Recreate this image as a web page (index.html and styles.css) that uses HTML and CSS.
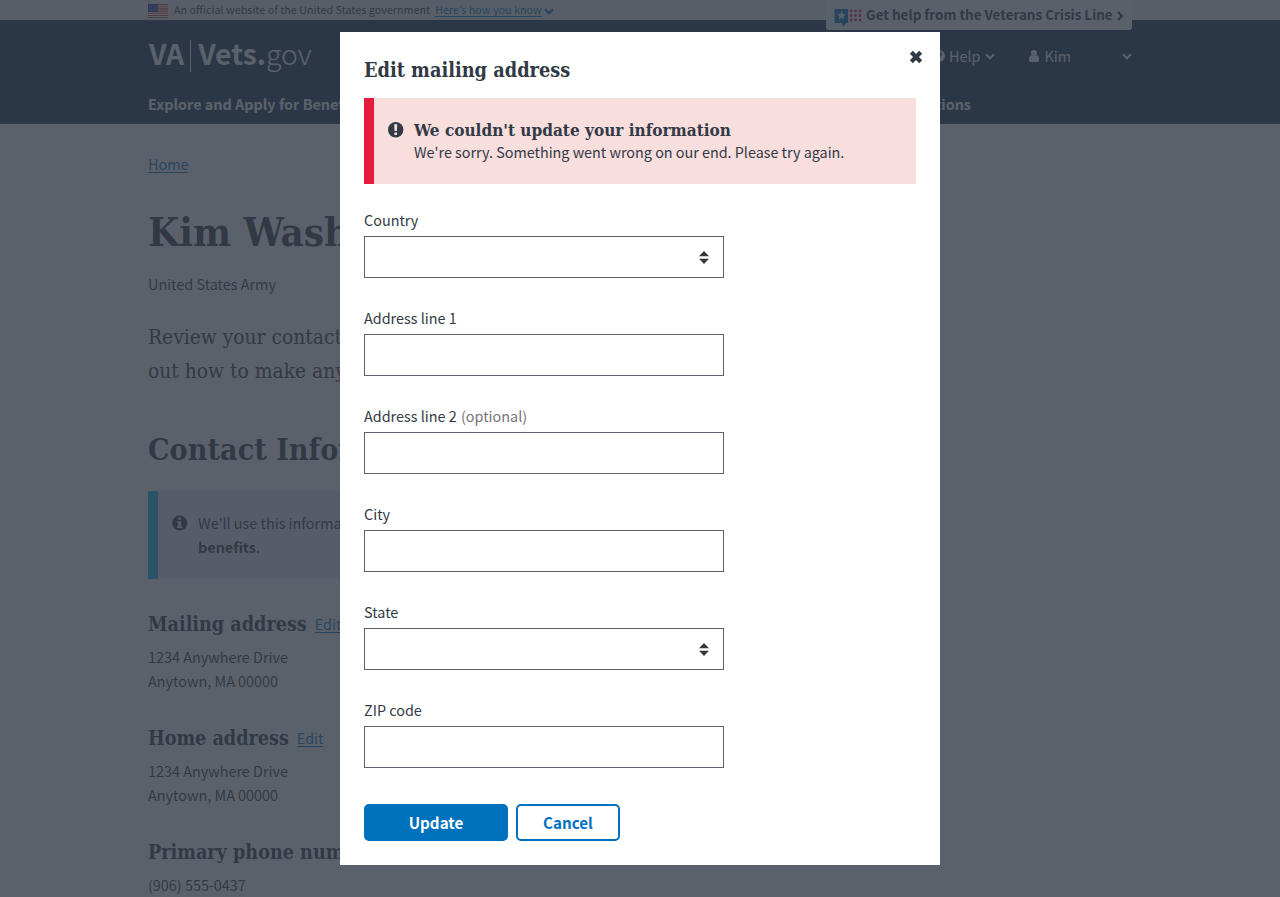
FILE: index.html
```html
<!DOCTYPE html>
<html lang="en">
<head>
<meta charset="utf-8">
<title>Vets.gov: Edit mailing address</title>
<link rel="stylesheet" href="styles.css">
</head>
<body>
<div class="page">
  <div class="banner">
    <svg class="flag" width="20" height="14" viewBox="0 0 20 14"><rect width="20" height="14" fill="#fff"/><path d="M0 .5h20M0 2.700h20M0 4.900h20M0 7.100h20M0 9.300h20M0 11.500h20M0 13.500h20" stroke="#db3e1f" stroke-width="1.100"/><rect width="10" height="8" fill="#1e33b1"/><path d="M1 2h9M1 4h9M1 6h9" stroke="#fff" stroke-dasharray="1 1" opacity=".5"/></svg>
    <span class="official">An official website of the United States government</span>
    <a class="know">Here’s how you know</a>
    <svg class="know-chevron" width="10" height="7" viewBox="0 0 10 7"><path d="M1 1.300l4 4 4-4" fill="none" stroke="#0071bc" stroke-width="2.200"/></svg>
    <div class="crisis">
      <svg width="29" height="20" viewBox="0 0 29 20"><path d="M0.500 1h13.500v14h-2l-2.500 4-1.500-4H.5z" fill="#0071bc"/><path d="M7.500 3l1.200 3.200 3.300.1-2.600 2 .9 3.200-2.800-1.800-2.800 1.800.9-3.200-2.600-2 3.300-.1z" fill="#fff"/><g fill="#e31c3d"><circle cx="17" cy="3" r="1.400"/><circle cx="21.500" cy="3" r="1.400"/><circle cx="26" cy="3" r="1.400"/><circle cx="17" cy="7.500" r="1.400"/><circle cx="21.500" cy="7.500" r="1.400"/><circle cx="26" cy="7.500" r="1.400"/><circle cx="17" cy="12" r="1.400"/><circle cx="21.500" cy="12" r="1.400"/><circle cx="26" cy="12" r="1.400"/></g></svg>
      <b class="crisis-text">Get help from the Veterans Crisis Line</b>
      <svg width="7" height="10" viewBox="0 0 7 10"><path d="M1 1l4 4-4 4" fill="none" stroke="#323a45" stroke-width="2"/></svg>
    </div>
  </div>
  <header class="header">
    <div class="brand-row">
      <div class="logo"><b class="va">VA</b><i class="bar"></i><b class="vets">Vets.</b><span class="gov">gov</span></div>
      <div class="tools">
        <svg width="12" height="12" viewBox="0 0 12 12"><circle cx="6" cy="6" r="6" fill="#fff"/><path d="M4 4.500c0-2.500 4-2.300 4 0C8 6 6 6 6 7.500M6 8.500v1.500" fill="none" stroke="#112e51" stroke-width="1.600"/></svg>
        <span class="help">Help</span>
        <svg class="help-chevron" width="10" height="7" viewBox="0 0 10 7"><path d="M1 1.300l4 4 4-4" fill="none" stroke="#fff" stroke-width="2"/></svg>
        <svg class="person" width="10" height="12" viewBox="0 0 10 12"><circle cx="5" cy="3" r="3" fill="#fff"/><path d="M2 5.200c2 1.500 4 1.500 6 0 1.500.3 2 2 2 4.500 0 1.500-.7 2.300-2 2.300H2C.7 12 0 11.200 0 9.700 0 7.200.5 5.500 2 5.200z" fill="#fff"/></svg>
        <span class="user">Kim</span>
        <svg class="user-chevron" width="10" height="7" viewBox="0 0 10 7"><path d="M1 1.300l4 4 4-4" fill="none" stroke="#fff" stroke-width="2"/></svg>
      </div>
    </div>
    <nav class="nav"><b>Explore and Apply for Benef</b><b>Locations</b></nav>
  </header>
  <main class="main">
    <a class="home">Home</a>
    <h1 class="name">Kim Wash</h1>
    <p class="branch">United States Army</p>
    <p class="intro">Review your contact<br>out how to make any</p>
    <h2 class="contact">Contact Infor</h2>
    <div class="info">
      <svg width="16" height="16" viewBox="0 0 16 16"><circle cx="7.700" cy="8" r="7.600" fill="#323a45"/><path d="M6.200 2.500h3v2.300h-3zM5.200 6.300h4v5h1.200V13H5v-1.700h1.200V8h-1z" fill="#e7e9f4"/></svg>
      <p class="info-text">We’ll use this informa<br><b>benefits</b>.</p>
    </div>
    <section class="entry"><h3 class="entry-title">Mailing address</h3><a class="edit">Edit</a><p class="entry-text">1234 Anywhere Drive<br>Anytown, MA 00000</p></section>
    <section class="entry"><h3 class="entry-title">Home address</h3><a class="edit">Edit</a><p class="entry-text">1234 Anywhere Drive<br>Anytown, MA 00000</p></section>
    <section class="entry"><h3 class="entry-title">Primary phone num</h3><p class="entry-text">(906) 555-0437</p></section>
  </main>
</div>
<div class="overlay">
  <div class="modal">
    <svg class="close" width="14" height="14" viewBox="0 0 14 14"><path d="M2.300 2.300l9.400 9.400M11.700 2.300l-9.400 9.400" fill="none" stroke="#323a45" stroke-width="4.200"/></svg>
    <h2 class="modal-title">Edit mailing address</h2>
    <div class="alert">
      <svg width="16" height="16" viewBox="0 0 16 16"><circle cx="7.700" cy="7.700" r="7.700" fill="#323a45"/><path d="M6.200 2.300h3L8.900 9H6.500zM6.400 10.400H9V13H6.400z" fill="#f9dede"/></svg>
      <div class="alert-body"><h3 class="alert-title">We couldn't update your information</h3><p class="alert-text">We're sorry. Something went wrong on our end. Please try again.</p></div>
    </div>
    <div class="field"><label>Country</label><div class="box"><svg width="10" height="13" viewBox="0 0 10 13"><path d="M5 0l5 5.200H0zM0 7.700h10L5 13z" fill="#323a45"/></svg></div></div>
    <div class="field"><label>Address line 1</label><div class="box"></div></div>
    <div class="field"><label>Address line 2 <span class="optional">(optional)</span></label><div class="box"></div></div>
    <div class="field"><label>City</label><div class="box"></div></div>
    <div class="field"><label>State</label><div class="box"><svg width="10" height="13" viewBox="0 0 10 13"><path d="M5 0l5 5.200H0zM0 7.700h10L5 13z" fill="#323a45"/></svg></div></div>
    <div class="field"><label>ZIP code</label><div class="box"></div></div>
    <div class="actions"><button class="btn update">Update</button><button class="btn cancel">Cancel</button></div>
  </div>
</div>
</body>
</html>
```
FILE: styles.css
```css
* { box-sizing: border-box; margin: 0; padding: 0; }
body { height: 897px; overflow: hidden; background: #fff; color: #323a45; font: 14.4px/24px "Noto Sans CJK KR", "Open Sans", sans-serif; }
h1, h2, h3, .intro { font-family: "DejaVu Serif Condensed", "DejaVu Serif", serif; font-stretch: condensed; white-space: nowrap; }
svg { display: block; flex: none; }
a { color: #0071bc; border-bottom: 1px solid #0071bc; white-space: nowrap; }
.page { height: 897px; overflow: hidden; }
.banner { height: 20px; background: #f1f1f1; padding: 0 148px; display: flex; align-items: center; position: relative; font-size: 10.8px; line-height: 20px; white-space: nowrap; }
.official { margin-left: 6px; margin-top: -2px; }
.know { margin-left: 5px; line-height: 13px; }
.know-chevron { margin-left: 2px; margin-top: 2px; }
.flag { margin-top: 1px; }
.crisis { position: absolute; left: 826px; top: 0; width: 306px; height: 30px; background: #f8f8fa; border-radius: 0 0 3px 3px; display: flex; align-items: center; padding-left: 8px; font-size: 13.45px; }
.crisis svg { margin-top: 1px; }
.crisis svg:first-child { margin-top: 5px; }
.crisis-text { margin: -2px 4px 0 3px; }
.header { height: 104px; background: #112e51; color: #fff; padding: 0 148px; border-bottom: 1px solid #34315b; }
.brand-row { height: 72px; display: flex; align-items: center; justify-content: space-between; }
.logo { display: flex; align-items: center; font-size: 28.3px; line-height: 32px; padding-left: 1px; }
.va, .vets, .gov { margin-top: -6px; }
.bar { width: 1px; height: 32px; background: #fff; margin: 0 7px 0 6px; }
.gov { font-weight: 300; }
.tools { display: flex; align-items: center; width: 199px; }
.help { margin-left: 4px; }
.help-chevron { margin-left: 5px; }
.person { margin-left: 34px; }
.user { margin-left: 5px; }
.user-chevron { margin-left: auto; }
.nav { display: flex; justify-content: space-between; width: 823px; line-height: 24px; }
.main { width: 984px; margin: 0 auto; padding-top: 31px; }
.home { display: block; width: 40px; line-height: 17px; }
.name { font-size: 40px; line-height: 52px; margin-top: 33px; }
.branch { margin-top: 14px; }
.intro { font-size: 20.8px; line-height: 34px; margin-top: 24px; }
.contact { font-size: 30.2px; line-height: 40px; margin-top: 42px; }
.info { width: 640px; height: 88px; margin-top: 21px; border-left: 10px solid #02bfe7; background: #e7e9f4; display: flex; padding: 20px 14px; }
.info svg { margin-top: 4px; }
.info-text { margin-left: 10px; }
.entry { display: flex; flex-wrap: wrap; align-items: center; width: 300px; margin-top: 34px; height: 80px; align-content: flex-start; }
.entry-title { font-size: 19.6px; line-height: 24px; margin-right: 8px; }
.entry-text { width: 100%; margin-top: 8px; }
.edit { line-height: 17px; margin-top: -2px; }
.overlay { position: absolute; inset: 0; background: rgba(50, 58, 69, .8); padding-top: 32px; }
.modal { position: relative; width: 600px; height: 833px; margin: 0 auto; background: #fff; padding: 24px; }
.close { position: absolute; top: 18px; right: 17px; }
.modal-title { font-size: 19.75px; line-height: 28px; }
.alert { height: 86px; margin-top: 14px; border-left: 10px solid #e31c3d; background: #f9dede; display: flex; padding: 20px 14px; }
.alert svg { margin-top: 4px; }
.alert-body { margin-left: 10px; }
.alert-title { font-size: 17.05px; line-height: 24px; }
.alert-text { line-height: 20px; white-space: nowrap; letter-spacing: -.02px; }
.field { margin-top: 28px; }
.alert + .field { margin-top: 24px; }
.field label { display: block; height: 28px; line-height: 24px; }
.optional { color: #757575; margin-left: 1px; }
.box { width: 360px; height: 42px; border: 1px solid #5b616b; display: flex; align-items: center; justify-content: flex-end; padding-right: 14px; }
.actions { display: flex; gap: 8px; margin-top: 36px; }
.btn { height: 37px; padding-bottom: 2px; border: 2px solid #0071bc; border-radius: 5px; font: bold 15.2px/24px "Noto Sans CJK KR", sans-serif; }
.update { width: 144px; background: #0071bc; color: #fff; }
.cancel { width: 104px; background: #fff; color: #0071bc; }
```
